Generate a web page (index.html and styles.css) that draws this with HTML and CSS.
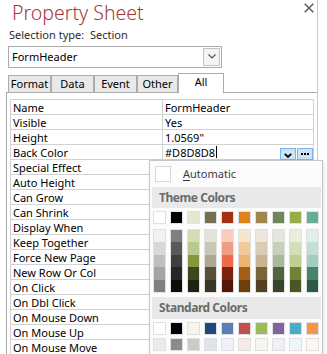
FILE: index.html
```html
<!DOCTYPE html>
<html lang="en">
<head>
    <meta charset="UTF-8">
    <meta name="viewport" content="width=device-width, initial-scale=1.0">
    <title>Property Sheet</title>
    <link rel="stylesheet" href="styles.css">
</head>
<body>
    <div class="pane">
        <div class="pane-header">
            <h1 class="title">Property Sheet</h1>
            <svg class="close" width="10" height="10" viewBox="0 0 10 10">
                <path d="M0.7 0.7L9.3 9.3M9.3 0.7L0.7 9.3" stroke="#5c5c5c" stroke-width="1.5" fill="none"/>
            </svg>
        </div>

        <div class="selection-type">Selection type:&nbsp; Section</div>

        <div class="combo">
            <span class="combo-text">FormHeader</span>
            <span class="combo-btn">
                <svg width="8" height="5" viewBox="0 0 8 5">
                    <path d="M0.5 0.5L4 4L7.5 0.5" fill="none" stroke="#555" stroke-width="1.2"/>
                </svg>
            </span>
        </div>

        <div class="tabs">
            <div class="tab tab-format">Format</div>
            <div class="tab tab-data">Data</div>
            <div class="tab tab-event">Event</div>
            <div class="tab tab-other">Other</div>
            <div class="tab tab-all tab-active">All</div>
        </div>

        <div class="tab-panel">
            <div class="props">
                <div class="prop-row"><div class="prop-name">Name</div><div class="prop-value">FormHeader</div></div>
                <div class="prop-row"><div class="prop-name">Visible</div><div class="prop-value">Yes</div></div>
                <div class="prop-row"><div class="prop-name">Height</div><div class="prop-value">1.0569"</div></div>
                <div class="prop-row">
                    <div class="prop-name">Back Color</div>
                    <div class="prop-value prop-editing">
                        <span>#D8D8D8</span><span class="caret"></span>
                        <span class="edit-btn edit-drop">
                            <svg width="8" height="5" viewBox="0 0 8 5">
                                <path d="M0.8 0.8L4 4L7.2 0.8" fill="none" stroke="#000" stroke-width="1.8"/>
                            </svg>
                        </span>
                        <span class="edit-btn edit-build"><i></i><i></i><i></i></span>
                    </div>
                </div>
                <div class="prop-row"><div class="prop-name">Special Effect</div><div class="prop-value"></div></div>
                <div class="prop-row"><div class="prop-name">Auto Height</div><div class="prop-value"></div></div>
                <div class="prop-row"><div class="prop-name">Can Grow</div><div class="prop-value"></div></div>
                <div class="prop-row"><div class="prop-name">Can Shrink</div><div class="prop-value"></div></div>
                <div class="prop-row"><div class="prop-name">Display When</div><div class="prop-value"></div></div>
                <div class="prop-row"><div class="prop-name">Keep Together</div><div class="prop-value"></div></div>
                <div class="prop-row"><div class="prop-name">Force New Page</div><div class="prop-value"></div></div>
                <div class="prop-row"><div class="prop-name">New Row Or Col</div><div class="prop-value"></div></div>
                <div class="prop-row"><div class="prop-name">On Click</div><div class="prop-value"></div></div>
                <div class="prop-row"><div class="prop-name">On Dbl Click</div><div class="prop-value"></div></div>
                <div class="prop-row"><div class="prop-name">On Mouse Down</div><div class="prop-value"></div></div>
                <div class="prop-row"><div class="prop-name">On Mouse Up</div><div class="prop-value"></div></div>
                <div class="prop-row"><div class="prop-name">On Mouse Move</div><div class="prop-value"></div></div>
            </div>
        </div>

        <div class="color-popup">
            <div class="auto-row">
                <span class="auto-swatch"></span>
                <span class="auto-label"><u>A</u>utomatic</span>
            </div>
            <div class="band">Theme Colors</div>
            <div id="themeRow" class="swatch-row"></div>
            <div id="shadeGrid" class="shade-grid"></div>
            <div class="band band-standard">Standard Colors</div>
            <div id="standardRow" class="swatch-row"></div>
            <div id="pastelRow" class="swatch-row"></div>
        </div>
    </div>

    <script>
        const themeColors = ['#ffffff', '#000000', '#e4e8d2', '#766f54', '#a5300f', '#e0821b', '#a2844f', '#6e8657', '#95ad4b', '#66ae91'];

        const shadeColors = [
            ['#f2f2f2', '#d8d8d8', '#bfbfbf', '#a5a5a5', '#7f7f7f'],
            ['#7f7f7f', '#595959', '#3f3f3f', '#262626', '#0c0c0c'],
            ['#d4dcb3', '#b9c98c', '#83973f', '#3c4720', '#1e2310'],
            ['#e4e2dc', '#cac6b6', '#aea793', '#585139', '#3a3626'],
            ['#f8cdc0', '#f29c83', '#ed6b4b', '#7c230b', '#531707'],
            ['#f9e5cf', '#f3c99b', '#efb370', '#a65f11', '#6f3f0b'],
            ['#ede6dc', '#dacdb6', '#c8b492', '#7a6239', '#523f26'],
            ['#e2e7dd', '#c6d0bb', '#a9b89a', '#52643f', '#37432a'],
            ['#eaefdb', '#d5dfb7', '#bfce93', '#6f8236', '#4a5624'],
            ['#e0efe9', '#c1dfd3', '#a2cfbd', '#45866a', '#2e5947']
        ];

        const standardColors = ['#ffffff', '#000000', '#f8f4ea', '#1f497d', '#5a7fb8', '#c0504d', '#9bbb59', '#8064a2', '#4bacc6', '#f79646'];
        const pastelColors = ['#ebebeb', '#8c8c8c', '#cdcac3', '#dee4ec', '#eef1f7', '#f8e9e9', '#f4f7ed', '#f1eff6', '#edf6f9', '#fef5ee'];

        function fillRow(id, colors) {
            const row = document.getElementById(id);
            colors.forEach(color => {
                const swatch = document.createElement('span');
                swatch.className = 'swatch';
                swatch.style.background = color;
                row.appendChild(swatch);
            });
        }

        function fillShades(id, columns) {
            const grid = document.getElementById(id);
            columns.forEach(column => {
                const col = document.createElement('div');
                col.className = 'shade-col';
                column.forEach(color => {
                    const cell = document.createElement('span');
                    cell.className = 'shade-cell';
                    cell.style.background = color;
                    col.appendChild(cell);
                });
                grid.appendChild(col);
            });
        }

        fillRow('themeRow', themeColors);
        fillShades('shadeGrid', shadeColors);
        fillRow('standardRow', standardColors);
        fillRow('pastelRow', pastelColors);
    </script>
</body>
</html>
```

FILE: styles.css
```css
:root {
    --title-color: #a4373a;
    --tab-border: #acacac;
    --grid-line: #d2d2d2;
    --swatch-border: #e0e0e0;
}

html,
body {
    overflow: hidden;
}

body {
    margin: 0;
    font-family: "Noto Sans", "Open Sans", sans-serif;
    font-size: 11px;
    color: #000;
    background: #fff;
}

.pane {
    position: relative;
    width: 318px;
    height: 354px;
    box-sizing: border-box;
    border-right: 1px solid #c8c8c8;
    display: flex;
    flex-direction: column;
}

.pane-header {
    display: flex;
    justify-content: space-between;
    align-items: flex-start;
}

.title {
    margin: 0;
    padding-left: 12px;
    font-size: 19.5px;
    font-weight: 300;
    line-height: 26.6px;
    color: var(--title-color);
}

.close {
    margin-top: 3px;
    margin-right: 3px;
}

.selection-type {
    padding-left: 9px;
    line-height: 15px;
    color: #2a2a2a;
}

.combo {
    display: flex;
    justify-content: space-between;
    margin: 4px 0 0 8px;
    width: 214px;
    height: 22px;
    box-sizing: border-box;
    border: 1px solid #ababab;
    padding: 1px 1px 1px 3px;
}

.combo-text {
    line-height: 18px;
}

.combo-btn {
    display: flex;
    align-items: center;
    justify-content: center;
    width: 17px;
    height: 18px;
    box-sizing: border-box;
    border: 1px solid #c4c4c4;
    background: #f4f4f4;
}

.tabs {
    display: flex;
    align-items: flex-end;
    margin: 5px 0 0 8px;
    height: 19px;
}

.tab {
    height: 17px;
    box-sizing: border-box;
    border: 1px solid var(--tab-border);
    border-bottom: none;
    background: #e9e9e9;
    text-align: center;
    line-height: 16px;
}

.tab-format { width: 43px; }
.tab-data { width: 43px; }
.tab-event { width: 43px; }
.tab-other { width: 41px; }
.tab-all { width: 46px; }

.tab-active {
    position: relative;
    height: 20px;
    margin-bottom: -1px;
    background: #fff;
}

.tab-panel {
    flex: 1;
    min-height: 0;
    margin-left: 6px;
    border-left: 1px solid var(--tab-border);
    border-top: 1px solid var(--tab-border);
    padding: 6px 0 0 3px;
}

.props {
    width: 304px;
    box-sizing: border-box;
    border: 1px solid var(--grid-line);
    border-bottom: none;
}

.prop-row {
    display: grid;
    grid-template-columns: 152px 1fr;
    height: 15px;
    box-sizing: border-box;
    border-bottom: 1px solid var(--grid-line);
    line-height: 15px;
}

.prop-name {
    padding-left: 2px;
    border-right: 1px solid var(--grid-line);
    white-space: nowrap;
}

.prop-value {
    padding-left: 2px;
    white-space: nowrap;
}

.prop-editing {
    display: flex;
    align-items: flex-end;
}

.caret {
    align-self: center;
    width: 1px;
    height: 12px;
    margin-left: 1px;
    background: #000;
}

.edit-btn {
    display: flex;
    box-sizing: border-box;
    width: 16px;
    height: 12px;
    border: 1px solid #7eb4ea;
    background: #cce4f7;
}

.edit-drop {
    margin-left: auto;
    align-items: flex-end;
    justify-content: center;
    padding-bottom: 1px;
}

.edit-build {
    margin-left: 1px;
    align-items: center;
    justify-content: center;
    gap: 1px;
}

.edit-build i {
    width: 2px;
    height: 2px;
    background: #000;
}

/* colour picker dropped from Back Color */
.color-popup {
    position: absolute;
    left: 149px;
    top: 160px;
    width: 174px;
    height: 210px;
    box-sizing: border-box;
    border: 1px solid #c6c6c6;
    background: #fcfcfc;
    box-shadow: 1px 1px 3px rgba(0, 0, 0, 0.12);
}

.auto-row {
    display: flex;
    align-items: center;
    height: 26px;
    padding-left: 5px;
}

.auto-swatch {
    width: 16px;
    height: 16px;
    box-sizing: border-box;
    border: 1px solid #d6d6d6;
    background: #fff;
}

.auto-label {
    margin-left: 12px;
    line-height: 16px;
    color: #3b3b3b;
}

.auto-label u {
    text-underline-offset: 2px;
}

.band {
    margin: 0 1px 0 2px;
    height: 21px;
    padding-left: 7px;
    background: #e9e9e9;
    font-size: 12px;
    font-weight: bold;
    line-height: 21px;
    letter-spacing: -0.45px;
    color: #6b6b6b;
}

.band-standard {
    margin-top: 4px;
    height: 22px;
    line-height: 22px;
}

.swatch-row {
    display: flex;
    gap: 4px;
    margin-top: 3px;
    padding-left: 3px;
}

.swatch {
    width: 13px;
    height: 13px;
    box-sizing: border-box;
    border: 1px solid var(--swatch-border);
}

.shade-grid {
    display: flex;
    gap: 4px;
    margin-top: 5px;
    padding-left: 3px;
}

.shade-col {
    display: flex;
    flex-direction: column;
    width: 13px;
    height: 64px;
    box-sizing: border-box;
    border: 1px solid var(--swatch-border);
}

.shade-cell {
    flex: 1;
}
```
